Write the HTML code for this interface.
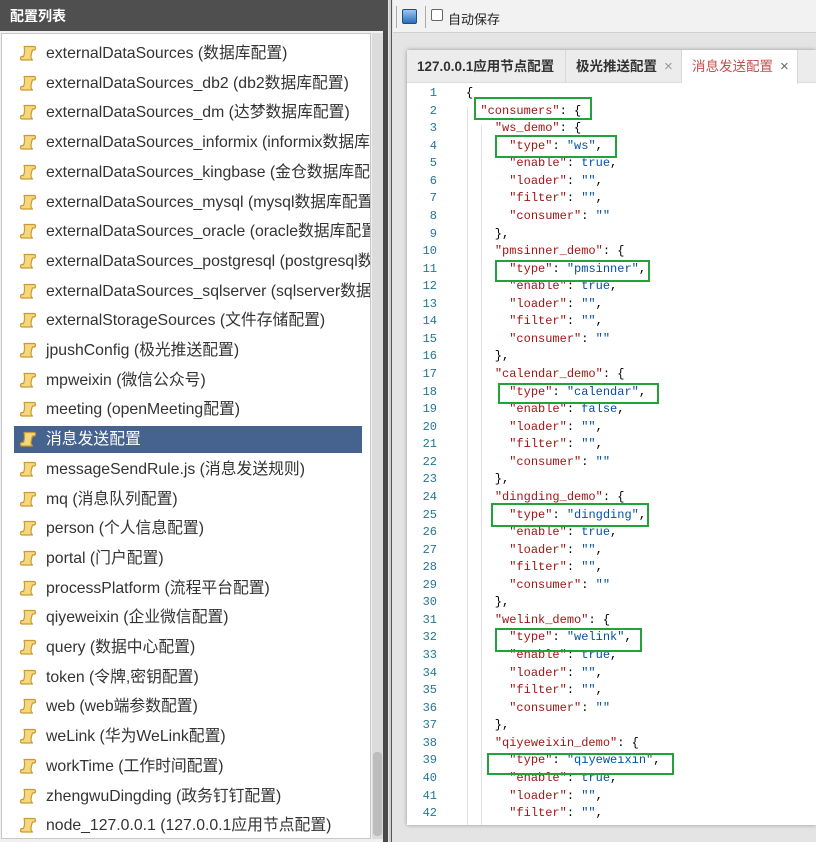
<!DOCTYPE html>
<html><head><meta charset="utf-8"><style>
*{margin:0;padding:0;box-sizing:border-box}
body{width:816px;height:842px;overflow:hidden;background:#e4e4e4;font-family:"Liberation Sans","Noto Sans CJK SC",sans-serif;position:relative}
.left{position:absolute;left:0;top:0;width:388px;height:842px;background:#f0f0f0}
.hdr{position:absolute;left:0;top:0;width:388px;height:31px;background:#4f4f4f;color:#fff;font-weight:bold;font-size:14px;line-height:33px;padding-left:10px}
.list{position:absolute;left:1px;top:33px;width:370px;height:806px;background:#fff;border:1px solid #c8c8c8;overflow:hidden}
.track{position:absolute;left:372px;top:33px;width:11px;height:806px;background:#dcdcdc}
.thumb{position:absolute;left:373px;top:752px;width:9px;height:84px;background:#bdbdbd;border-radius:4px}
.dbar{position:absolute;left:383px;top:31px;width:5px;height:811px;background:#4a4a4a}
.it{position:absolute;left:12px;width:400px;height:27px;font-size:15.8px;color:#333;line-height:27px;padding-left:32px;white-space:nowrap}
.it.sel{background:#46628f;color:#fff;width:348px}
.ic{position:absolute;left:4px;top:4px}
.split{position:absolute;left:389px;top:0;width:3px;height:842px;background:#cfcfcf;border-right:1px solid #555}
.tb{position:absolute;left:393px;top:0;width:423px;height:33px;background:#f2f2f2;border-bottom:1px solid #d0d0d0;font-size:13px}
.ed{position:absolute;left:407px;top:50px;width:409px;height:775px;background:#fff;box-shadow:0 0 4px rgba(0,0,0,.35)}
.tabs{position:absolute;left:0;top:0;width:409px;height:33px;background:#ececec;border-bottom:1px solid #ddd}
.tab{position:absolute;top:0;height:33px;line-height:34px;font-size:13.5px;font-weight:bold;color:#333;border-right:1px solid #d8d8d8;padding-left:10px}
.x{color:#999;font-weight:normal;font-size:15px;position:absolute}
.code{position:absolute;left:0;top:35px;font-family:"Liberation Mono",monospace;font-size:12px;line-height:17.56px;white-space:pre}
.ln{position:absolute;left:0;width:30px;text-align:right;color:#237893;font-family:"Liberation Mono",monospace;font-size:12px;line-height:17.56px;top:35px;white-space:pre}
.k{color:#a31515}.v{color:#0451a5}
.gb{position:absolute;border:2px solid #22a33a}
.gl{position:absolute;top:57px;width:1px;background:#e2e2e2}
</style></head><body>
<div class="left">
<div class="hdr">配置列表</div>
<div class="list" id="list"></div>
<div class="track"></div><div class="thumb"></div><div class="dbar"></div>
</div>
<div class="split"></div>
<div class="tb">
<div style="position:absolute;left:3px;top:6px;width:1px;height:22px;background:#aaa"></div>
<div style="position:absolute;left:9px;top:9px;width:15px;height:15px;background:linear-gradient(#9cc6ee,#2a6fb8);border:1px solid #1d4f87;border-radius:2px"></div>
<div style="position:absolute;left:32px;top:6px;width:1px;height:22px;background:#aaa"></div>
<div style="position:absolute;left:38px;top:9px;width:12px;height:12px;border:1px solid #666;border-radius:2px;background:#fff"></div>
<div style="position:absolute;left:55px;top:9px;color:#222">自动保存</div>
</div>
<div class="ed">
<div class="tabs">
<div class="tab" style="left:0;width:159px">127.0.0.1应用节点配置</div>
<div class="tab" style="left:159px;width:116px">极光推送配置<span class="x" style="left:98px">×</span></div>
<div class="tab" style="left:275px;width:116px;background:#fff;color:#c0504d;font-weight:normal;height:34px">消息发送配置<span class="x" style="left:98px;color:#666">×</span></div>
</div>
<div class="gl" style="left:60px;height:718px"></div>
<div class="gl" style="left:74px;top:75px;height:700px"></div>
<div class="ln" id="ln"></div>
<div class="code" id="code" style="left:59px"></div>
</div>
<div class="gb" style="left:474px;top:97px;width:118px;height:23px"></div>
<div class="gb" style="left:495px;top:135px;width:122px;height:23px"></div>
<div class="gb" style="left:495px;top:260px;width:155px;height:22px"></div>
<div class="gb" style="left:498px;top:383px;width:161px;height:21px"></div>
<div class="gb" style="left:491px;top:503px;width:158px;height:24px"></div>
<div class="gb" style="left:495px;top:628px;width:147px;height:24px"></div>
<div class="gb" style="left:487px;top:753px;width:187px;height:22px"></div>
<script>
var names=["externalDataSources (数据库配置)","externalDataSources_db2 (db2数据库配置)","externalDataSources_dm (达梦数据库配置)","externalDataSources_informix (informix数据库配置)","externalDataSources_kingbase (金仓数据库配置)","externalDataSources_mysql (mysql数据库配置)","externalDataSources_oracle (oracle数据库配置)","externalDataSources_postgresql (postgresql数据库配置)","externalDataSources_sqlserver (sqlserver数据库配置)","externalStorageSources (文件存储配置)","jpushConfig (极光推送配置)","mpweixin (微信公众号)","meeting (openMeeting配置)","消息发送配置","messageSendRule.js (消息发送规则)","mq (消息队列配置)","person (个人信息配置)","portal (门户配置)","processPlatform (流程平台配置)","qiyeweixin (企业微信配置)","query (数据中心配置)","token (令牌,密钥配置)","web (web端参数配置)","weLink (华为WeLink配置)","workTime (工作时间配置)","zhengwuDingding (政务钉钉配置)","node_127.0.0.1 (127.0.0.1应用节点配置)"];
var ic='<svg class="ic" width="20" height="20" viewBox="0 0 20 20"><path d="M6 2.5h10c2 0 2 3.5 0 3.5h-1.5c-.8 2-1.2 4-1.5 6-.3 2 .5 3 1.5 4H4c-2 0-2-3.5 0-3.5h1.5c.8-2 1.2-4 1-6C6.3 4 6.5 3 6 2.5z" fill="#f5d77e" stroke="#c99a35" stroke-width="1.2" stroke-linejoin="round"/></svg>';
var h='';names.forEach(function(n,i){h+='<div class="it'+(i==13?' sel':'')+'" style="top:'+(6+i*29.7)+'px">'+ic+n+'</div>'});
document.getElementById('list').innerHTML=h;
function K(s){return '<span class="k">"'+s+'"</span>'}
function V(s){return '<span class="v">"'+s+'"</span>'}
var L=['{','  '+K('consumers')+': {'];
var blocks=[['ws_demo','ws','true'],['pmsinner_demo','pmsinner','true'],['calendar_demo','calendar','false'],['dingding_demo','dingding','true'],['welink_demo','welink','true'],['qiyeweixin_demo','qiyeweixin','true']];
blocks.forEach(function(b){L.push('    '+K(b[0])+': {');L.push('      '+K('type')+': '+V(b[1])+',');L.push('      '+K('enable')+': <span class="v">'+b[2]+'</span>,');L.push('      '+K('loader')+': '+V('')+',');L.push('      '+K('filter')+': '+V('')+',');L.push('      '+K('consumer')+': '+V(''));L.push('    },');});
L=L.slice(0,42);
document.getElementById('code').innerHTML=L.join('\n');
var n=[];for(var i=1;i<=42;i++)n.push(i);document.getElementById('ln').textContent=n.join('\n');
</script>
</body></html>
